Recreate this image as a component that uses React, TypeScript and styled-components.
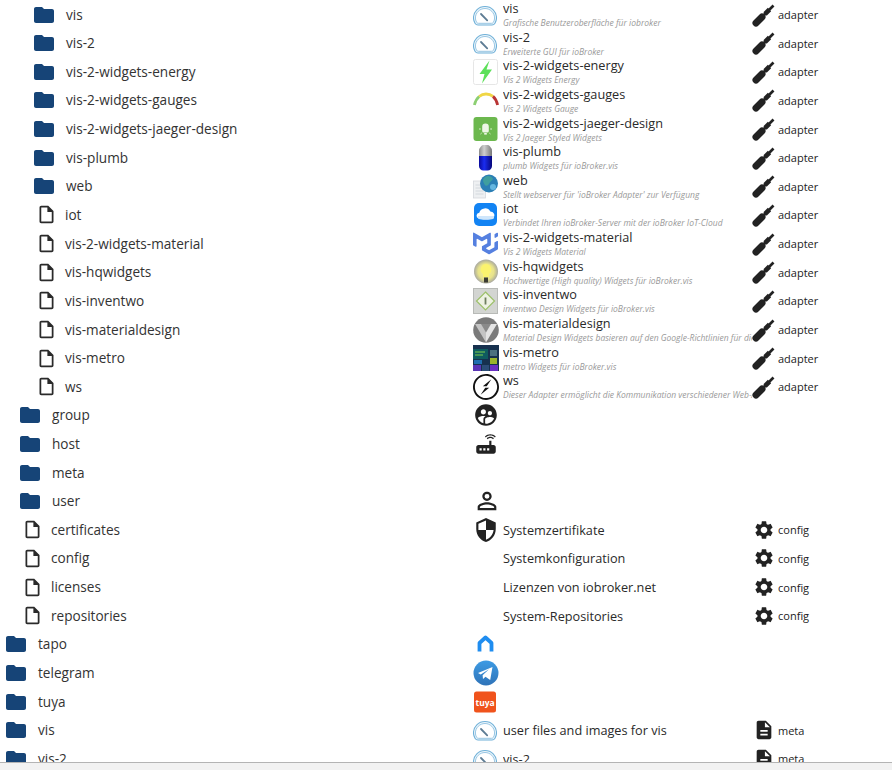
import React from 'react';
import styled, { createGlobalStyle } from 'styled-components';
import { MdFolder, MdOutlineInsertDriveFile, MdSettings, MdSupervisedUserCircle, MdRouter, MdPersonOutline, MdSecurity, MdDescription } from 'react-icons/md';
import { SiMui, SiSocketdotio } from 'react-icons/si';

const Global = createGlobalStyle`
  html, body { margin: 0; padding: 0; background: #fff; }
  body { font-family: "Open Sans", "Noto Sans", sans-serif; color: #2a2a2a; }
`;
const Page = styled.div`height: 770px; display: flex; flex-direction: column; overflow: hidden;`;
const Viewport = styled.div`height: 762px; overflow: hidden; border-bottom: 1px solid #b4b4b4; flex: none;`;
const Footer = styled.div`flex: 1; background: #f2f2f2;`;
const Row = styled.div`display: grid; grid-template-columns: 473px 30px 249px 1fr; height: 28.65px; align-items: center;`;
const NameCell = styled.div<{ $level: number; $file: boolean }>`
  display: flex; align-items: center; height: 100%;
  padding-left: ${p => p.$level * 14 + (p.$file ? 8 : 4)}px;
`;
const NameIcon = styled.span<{ $file: boolean }>`
  display: flex; width: ${p => (p.$file ? 29 : 34)}px; flex: none;
  color: ${p => (p.$file ? '#2a2a2a' : '#164477')};
`;
const NameText = styled.span`font-size: 13.6px; line-height: 18px; white-space: nowrap; color: #333;`;
const IconCell = styled.div`display: flex; align-items: center; justify-content: flex-start; height: 100%;`;
const TextCell = styled.div`min-width: 0; overflow-x: clip; display: flex; flex-direction: column; justify-content: center; height: 100%; padding-top: 1px; box-sizing: border-box;`;
const Title = styled.div`font-size: 12.7px; line-height: 15px; white-space: nowrap;`;
const Desc = styled.div`font-size: 8.5px; line-height: 13px; font-style: italic; color: #999; white-space: nowrap;`;
const TypeCell = styled.div`display: flex; align-items: center; gap: 2px; height: 100%; font-size: 11px; color: #222;`;
const TypeIcon = styled.span`display: flex; width: 24px; flex: none; justify-content: center; color: #222;`;

const Gauge = () => (
  <svg width="24" height="24" viewBox="0 0 24 24" fill="none">
    <path d="M5 22h14c1.500 0 2.200-.5 3-1.800 1-1.700 1.500-3.400 1.500-5.200C23.500 8.500 18.500 3.500 12 3.500S.5 8.500.5 15c0 1.800.5 3.500 1.500 5.200.8 1.300 1.500 1.800 3 1.800z" fill="#eef6fb" stroke="#6fb0d8" strokeWidth="1.100" />
    <path d="M5.500 20.300h13c1 0 1.500-.3 2-1.200.7-1.300 1.100-2.700 1.100-4.100 0-5.200-4.300-9.500-9.600-9.500S2.400 9.800 2.400 15c0 1.400.4 2.800 1.100 4.100.5.900 1 1.200 2 1.200z" fill="#fff" stroke="#8cc0e0" strokeWidth=".9" />
    <path d="M8 11l6.200 6.300" stroke="#5d7c94" strokeWidth="1.800" strokeLinecap="round" />
  </svg>
);
const Energy = () => (
  <svg width="26" height="26" viewBox="0 0 26 26">
    <rect x=".5" y=".5" width="24" height="25" rx="2" fill="#fff" stroke="#e6e6e6" />
    <path d="M16.500 1.500L6.500 15h5L9 24.500 19 10.500h-5.500z" fill="#5de05a" />
  </svg>
);
const GaugeArc = () => (
  <svg width="26" height="26" viewBox="0 0 26 26" fill="none" strokeWidth="2.800">
    <path d="M1.400 18C2.200 14.500 3.800 11.500 6.200 9.500" stroke="#8ccf72" />
    <path d="M6.200 9.500C8.200 7.800 10.500 7 13 7c2.800 0 5 .8 7 2.400" stroke="#f0d645" />
    <path d="M20 9.400c2.300 2 3.800 5 4.600 8.600" stroke="#b93434" />
  </svg>
);
const Jaeger = () => (
  <svg width="26" height="26" viewBox="0 0 26 26">
    <rect x=".5" y="1" width="24" height="24" rx="3" fill="#6cb84e" />
    <path d="M12.500 7.500a3.300 3.300 0 0 1 3.300 3.300V15a1.500 1.500 0 0 1-1.500 1.500h-3.600A1.500 1.500 0 0 1 9.200 15v-4.200a3.300 3.300 0 0 1 3.300-3.300z" fill="#eef7e6" />
    <rect x="11.200" y="17" width="2.600" height="1.600" fill="#eef7e6" />
    <path d="M6 13h1.800M17.200 13H19M7.500 18l1.200-1M17.500 18l-1.200-1" stroke="#dcefcf" strokeWidth="1" />
  </svg>
);
const Plumb = () => (
  <svg width="26" height="26" viewBox="0 0 26 26">
    <defs>
      <linearGradient id="pg" x1="0" x2="1"><stop offset="0" stopColor="#8a8a8a" /><stop offset=".4" stopColor="#cfcfcf" /><stop offset="1" stopColor="#777" /></linearGradient>
      <linearGradient id="pb" x1="0" x2="1"><stop offset="0" stopColor="#0a0a9c" /><stop offset=".4" stopColor="#1a2cf0" /><stop offset="1" stopColor="#06067a" /></linearGradient>
    </defs>
    <path d="M6 11V6a6.500 6.500 0 0 1 13 0v5z" fill="url(#pg)" />
    <path d="M6 11h13v10a4.500 4.500 0 0 1-4.500 4.500h-4A4.500 4.500 0 0 1 6 21z" fill="url(#pb)" />
  </svg>
);
const Web = () => (
  <svg width="26" height="26" viewBox="0 0 26 26">
    <rect x=".5" y="8" width="12" height="17" fill="#eef0f2" stroke="#d4d8dc" strokeWidth=".8" />
    <path d="M2.500 12h8M2.500 15h8M2.500 18h8M2.500 21h8" stroke="#ccd2d8" strokeWidth=".8" />
    <circle cx="16" cy="10.500" r="9" fill="#2b7fb5" />
    <path d="M11 5c3-3 7-2 8.500 0s-2 3-3 5-3 4-4.500 2-3-5-1-7z" fill="#3f9e9f" />
    <circle cx="20" cy="14" r="3" fill="#65b6e0" />
  </svg>
);
const Iot = () => (
  <svg width="26" height="26" viewBox="0 0 26 26">
    <rect x="1" y="1" width="23" height="23" rx="5" fill="#1283f3" />
    <path d="M5.500 16.500a3 3 0 0 1 .8-5.800 6 6 0 0 1 11-1.300 4 4 0 0 1 2.700 7.100c-2 1-12.500 1-14.500 0z" fill="#fff" />
    <path d="M5 14h16v1.500a2 2 0 0 1-1 1.500c-2 1-12.500 1-14 0-1-.5-1-2-1-3z" fill="#cfe6fb" />
  </svg>
);
const Hq = () => (
  <svg width="26" height="26" viewBox="0 0 26 26">
    <defs><radialGradient id="hq"><stop offset="0" stopColor="#f4ef9c" /><stop offset=".65" stopColor="#e8e38a" /><stop offset="1" stopColor="#a9a9a0" /></radialGradient></defs>
    <circle cx="13" cy="12.500" r="12" fill="url(#hq)" />
    <path d="M13 5a5.500 5.500 0 0 1 3 10v3h-6v-3a5.500 5.500 0 0 1 3-10z" fill="#fbf36e" />
    <rect x="11" y="18.500" width="4" height="5" fill="#3a3a32" />
  </svg>
);
const Inventwo = () => (
  <svg width="26" height="26" viewBox="0 0 26 26">
    <rect x=".5" y=".5" width="24" height="25" fill="#d3d5d2" stroke="#b8bab7" />
    <path d="M12.500 4l9 9-9 9-9-9z" fill="#eef2e3" stroke="#9cc06a" strokeWidth="1.200" />
    <rect x="11.600" y="9.500" width="1.800" height="7" fill="#6f7f5f" />
  </svg>
);
const MatDesign = () => (
  <svg width="26" height="26" viewBox="0 0 26 26">
    <circle cx="13" cy="13" r="12.800" fill="#7a7a7a" />
    <path d="M2 7h11v18.500z" fill="#c4c4c4" />
    <path d="M24 7H13v18.500z" fill="#e4e4e4" />
    <path d="M8 7h10l-5 8.500z" fill="#8a8a8a" />
  </svg>
);
const Metro = () => (
  <svg width="26" height="26" viewBox="0 0 26 26">
    <rect x="0" y="0" width="26" height="26" fill="#17314f" />
    <rect x="0" y="4" width="15" height="10" fill="#0f5b5f" />
    <rect x="1" y="15" width="8" height="4" fill="#1f6fb0" />
    <rect x="17" y="5" width="7" height="6" fill="#4a7080" />
    <rect x="17" y="13" width="7" height="6" fill="#9ab52d" />
    <rect x="0" y="20" width="8" height="6" fill="#5a35b5" />
    <rect x="9" y="20" width="7" height="6" fill="#2c4d78" />
    <rect x="17" y="20" width="8" height="6" fill="#6a2fc4" />
    <path d="M2 7h10M2 10h8" stroke="#7fd04a" strokeWidth="1" />
  </svg>
);
const Tapo = () => (
  <svg width="26" height="26" viewBox="0 0 26 26" fill="none">
    <path d="M6.500 20.500v-8.500L12.500 6.500l6 5.500v8.500" stroke="#1f8df0" strokeWidth="3.800" strokeLinejoin="round" />
  </svg>
);
const Telegram = () => (
  <svg width="26" height="26" viewBox="0 0 26 26">
    <defs><linearGradient id="tg" x1="0" x2="0" y1="0" y2="1"><stop offset="0" stopColor="#3d9be4" /><stop offset="1" stopColor="#2f73b8" /></linearGradient></defs>
    <circle cx="13" cy="13" r="12.500" fill="url(#tg)" />
    <path d="M5 13l14.500-6-2.300 13-4.700-3.300-2.500 2.300-.4-3.700 6.400-6-8.300 5.200z" fill="#fff" />
  </svg>
);
const TuyaText = styled.text`font-family: "Open Sans", sans-serif; font-size: 8.5px; font-weight: 700; fill: #fff;`;
const Tuya = () => (
  <svg width="26" height="26" viewBox="0 0 26 26">
    <rect x="1" y="2.500" width="22" height="21" rx="2.500" fill="#f0531c" />
    <TuyaText x="2.500" y="16.500">tuya</TuyaText>
  </svg>
);
const Plug = () => (
  <svg width="24" height="24" viewBox="0 0 24 24" fill="none" stroke="#222">
    <path d="M4 20L10 14" strokeWidth="7" strokeLinecap="round" />
    <path d="M10 14l4-4" strokeWidth="3" />
    <path d="M13 11l4.500-4.500" strokeWidth="4.600" />
    <path d="M17 7l4.500-4.500" strokeWidth="2.600" />
  </svg>
);

const icons: Record<string, React.ReactNode> = {
  gauge: <Gauge />, energy: <Energy />, arc: <GaugeArc />, jaeger: <Jaeger />, plumb: <Plumb />, web: <Web />,
  iot: <Iot />, mui: <SiMui size={25} color="#5580e0" />, hq: <Hq />, inv: <Inventwo />, mat: <MatDesign />, metro: <Metro />,
  ws: <SiSocketdotio size={26} color="#111" />,
  tapo: <Tapo />, tg: <Telegram />, tuya: <Tuya />,
  group: <MdSupervisedUserCircle size={26} color="#222" />, host: <MdRouter size={26} color="#222" />,
  user: <MdPersonOutline size={28} color="#222" />, shield: <MdSecurity size={26} color="#222" />,
};

type Item = { n: string; l: number; f?: boolean; i?: string; t?: string; d?: string; k?: 'adapter' | 'config' | 'meta' };
const items: Item[] = [
  { n: 'vis', l: 2, i: 'gauge', t: 'vis', d: 'Grafische Benutzeroberfläche für iobroker', k: 'adapter' },
  { n: 'vis-2', l: 2, i: 'gauge', t: 'vis-2', d: 'Erweiterte GUI für ioBroker', k: 'adapter' },
  { n: 'vis-2-widgets-energy', l: 2, i: 'energy', t: 'vis-2-widgets-energy', d: 'Vis 2 Widgets Energy', k: 'adapter' },
  { n: 'vis-2-widgets-gauges', l: 2, i: 'arc', t: 'vis-2-widgets-gauges', d: 'Vis 2 Widgets Gauge', k: 'adapter' },
  { n: 'vis-2-widgets-jaeger-design', l: 2, i: 'jaeger', t: 'vis-2-widgets-jaeger-design', d: 'Vis 2 Jaeger Styled Widgets', k: 'adapter' },
  { n: 'vis-plumb', l: 2, i: 'plumb', t: 'vis-plumb', d: 'plumb Widgets für ioBroker.vis', k: 'adapter' },
  { n: 'web', l: 2, i: 'web', t: 'web', d: "Stellt webserver für 'ioBroker Adapter' zur Verfügung", k: 'adapter' },
  { n: 'iot', l: 2, f: true, i: 'iot', t: 'iot', d: 'Verbindet Ihren ioBroker-Server mit der ioBroker IoT-Cloud', k: 'adapter' },
  { n: 'vis-2-widgets-material', l: 2, f: true, i: 'mui', t: 'vis-2-widgets-material', d: 'Vis 2 Widgets Material', k: 'adapter' },
  { n: 'vis-hqwidgets', l: 2, f: true, i: 'hq', t: 'vis-hqwidgets', d: 'Hochwertige (High quality) Widgets für ioBroker.vis', k: 'adapter' },
  { n: 'vis-inventwo', l: 2, f: true, i: 'inv', t: 'vis-inventwo', d: 'inventwo Design Widgets für ioBroker.vis', k: 'adapter' },
  { n: 'vis-materialdesign', l: 2, f: true, i: 'mat', t: 'vis-materialdesign', d: 'Material Design Widgets basieren auf den Google-Richtlinien für die Visualisierung', k: 'adapter' },
  { n: 'vis-metro', l: 2, f: true, i: 'metro', t: 'vis-metro', d: 'metro Widgets für ioBroker.vis', k: 'adapter' },
  { n: 'ws', l: 2, f: true, i: 'ws', t: 'ws', d: 'Dieser Adapter ermöglicht die Kommunikation verschiedener Web-Anwendungen', k: 'adapter' },
  { n: 'group', l: 1, i: 'group' },
  { n: 'host', l: 1, i: 'host' },
  { n: 'meta', l: 1 },
  { n: 'user', l: 1, i: 'user' },
  { n: 'certificates', l: 1, f: true, i: 'shield', t: 'Systemzertifikate', k: 'config' },
  { n: 'config', l: 1, f: true, t: 'Systemkonfiguration', k: 'config' },
  { n: 'licenses', l: 1, f: true, t: 'Lizenzen von iobroker.net', k: 'config' },
  { n: 'repositories', l: 1, f: true, t: 'System-Repositories', k: 'config' },
  { n: 'tapo', l: 0, i: 'tapo' },
  { n: 'telegram', l: 0, i: 'tg' },
  { n: 'tuya', l: 0, i: 'tuya' },
  { n: 'vis', l: 0, i: 'gauge', t: 'user files and images for vis', k: 'meta' },
  { n: 'vis-2', l: 0, i: 'gauge', t: 'vis-2', k: 'meta' },
];

const kindIcon = (k: string) =>
  k === 'adapter' ? <Plug /> : k === 'config' ? <MdSettings size={22} /> : <MdDescription size={22} />;

export default function App() {
  return (
    <Page>
      <Global />
      <Viewport>
        {items.map((it, idx) => (
          <Row key={idx}>
            <NameCell $level={it.l} $file={!!it.f}>
              <NameIcon $file={!!it.f}>
                {it.f ? <MdOutlineInsertDriveFile size={21} /> : <MdFolder size={24} />}
              </NameIcon>
              <NameText>{it.n}</NameText>
            </NameCell>
            <IconCell>{it.i ? icons[it.i] : null}</IconCell>
            <TextCell>
              {it.t && <Title>{it.t}</Title>}
              {it.d && <Desc>{it.d}</Desc>}
            </TextCell>
            <TypeCell>
              {it.k && <TypeIcon>{kindIcon(it.k)}</TypeIcon>}
              {it.k}
            </TypeCell>
          </Row>
        ))}
      </Viewport>
      <Footer />
    </Page>
  );
}
